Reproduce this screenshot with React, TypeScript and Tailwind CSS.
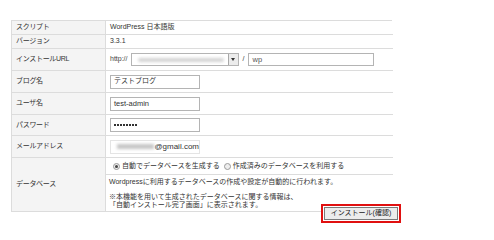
const font = "font-['Liberation_Sans','Noto_Sans_CJK_JP',sans-serif]";

const Row = ({
  label,
  h,
  children,
}: {
  label: string;
  h: string;
  children: React.ReactNode;
}) => (
  <>
    <div className={`${h} flex items-center border-b border-r border-[#dcdcdc] bg-[#f4f4f4] pl-[4px] text-[7px] tracking-[-0.3px] text-[#333]`}>
      {label}
    </div>
    <div className={`${h} flex items-center border-b border-[#dcdcdc] bg-white pl-[4px] text-[#333]`}>
      {children}
    </div>
  </>
);

const Field = ({ children }: { children?: React.ReactNode }) => (
  <div className="flex h-[14px] w-[90px] items-center border border-[#b4b4b4] bg-white pl-[3px] text-[7.5px]">
    {children}
  </div>
);

const Radio = ({ on }: { on?: boolean }) => (
  <span className="mr-[2px] inline-flex h-[7px] w-[7px] items-center justify-center rounded-full border border-[#9a9a9a] bg-[#eee]">
    {on && <span className="h-[3px] w-[3px] rounded-full bg-[#444]" />}
  </span>
);

export default function App() {
  return (
    <div className={`h-[240px] w-[494px] bg-white ${font}`}>
      <div className="pl-[11px] pt-[20px]">
        <div className="grid w-[381px] grid-cols-[94px_287px] border-l border-r border-t border-[#dcdcdc]">
          <Row label="スクリプト" h="h-[14px]">
            <span className="text-[7px]">WordPress 日本語版</span>
          </Row>
          <Row label="バージョン" h="h-[14px]">
            <span className="text-[7px]">3.3.1</span>
          </Row>
          <Row label="インストールURL" h="h-[22px]">
            <span className="mr-[3px] text-[7px] text-[#444]">http://</span>
            <div className="flex h-[13px] w-[108px] items-center border border-[#b4b4b4] bg-white">
              <div className="ml-[6px] h-[4px] w-[86px] rounded-full bg-[#d4d4d4] blur-[1.5px]" />
              <div className="ml-auto flex h-[11px] w-[10px] items-center justify-center border-l border-[#a8a8a8] bg-[#ececec]">
                <span className="h-0 w-0 border-l-[2.5px] border-r-[2.5px] border-t-[3px] border-l-transparent border-r-transparent border-t-[#333]" />
              </div>
            </div>
            <span className="mx-[4px] text-[7px]">/</span>
            <div className="flex h-[13px] w-[126px] items-center border border-[#b4b4b4] bg-white pl-[3px] text-[7.5px] text-[#555]">
              wp
            </div>
          </Row>
          <Row label="ブログ名" h="h-[22px]">
            <Field>
              <span className="text-[7px]">テストブログ</span>
            </Field>
          </Row>
          <Row label="ユーザ名" h="h-[22px]">
            <Field>test-admin</Field>
          </Row>
          <Row label="パスワード" h="h-[21px]">
            <Field>
              <span className="flex gap-[1.5px]">
                {Array.from({ length: 8 }).map((_, i) => (
                  <span key={i} className="h-[1.5px] w-[1.5px] bg-[#333]" />
                ))}
              </span>
            </Field>
          </Row>
          <Row label="メールアドレス" h="h-[22px]">
            <div className="flex h-[14px] w-[90px] items-center border border-[#e4e4e4] bg-white text-[8px]">
              <div className="ml-[6px] h-[5px] w-[38px] bg-[#c6c6c6] blur-[1.5px]" />
              <span>@gmail.com</span>
            </div>
          </Row>
          <div className="flex h-[54px] items-center border-b border-r border-[#dcdcdc] bg-[#f4f4f4] pl-[4px] text-[7px] tracking-[-0.3px] text-[#333]">
            データベース
          </div>
          <div className="flex h-[54px] flex-col border-b border-[#dcdcdc] bg-white text-[#333]">
            <div className="flex h-[17px] items-center border-b border-[#dcdcdc] pl-[7px] text-[7px]">
              <Radio on />
              <span>自動でデータベースを生成する</span>
              <span className="ml-[4px]" />
              <Radio />
              <span>作成済みのデータベースを利用する</span>
            </div>
            <div className="pl-[3px] pt-[3px] text-[7px] leading-[8px]">
              <div>Wordpressに利用するデータベースの作成や設定が自動的に行われます。</div>
              <div className="mt-[7px]">※本機能を用いて生成されたデータベースに関する情報は、</div>
              <div>「自動インストール完了画面」に表示されます。</div>
            </div>
          </div>
        </div>
        <div className="flex w-[390px] justify-end">
          <div className="mt-[-8px] border-2 border-[#e01010] bg-white p-[1px]">
            <button className="flex h-[13px] w-[74px] items-center justify-center border border-[#7a7a7a] bg-[#ececec] text-[7px] text-[#222]">
              インストール(確認)
            </button>
          </div>
        </div>
      </div>
    </div>
  );
}
